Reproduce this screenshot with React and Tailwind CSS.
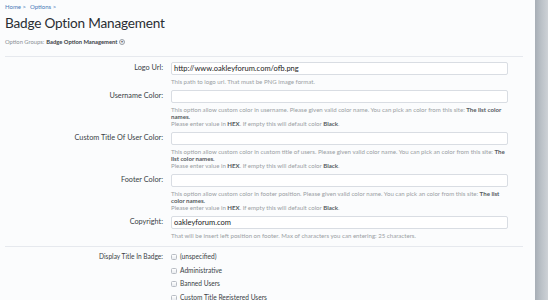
import React from "react";

const font = { fontFamily: "Lato, 'Open Sans', sans-serif" };

function Help({ children }) {
  return (
    <div className="mt-[2.5px] text-[6.1px] leading-[7px] text-[#9a9ea3]">{children}</div>
  );
}

function B({ children }) {
  return <b className="font-bold text-[#555a60]">{children}</b>;
}

function TextRow({ label, value, children }) {
  return (
    <>
      <div className="h-[13px] flex items-center justify-end text-[7.3px] text-[#3a3f45]">{label}</div>
      <div>
        <div className="h-[13px] bg-white border border-[#d9dde3] rounded-[2px] flex items-center px-[2px] text-[7.5px] text-[#222]">
          {value}
        </div>
        {children}
      </div>
    </>
  );
}

function ColorHelp({ text, tail }) {
  return (
    <Help>
      <div>
        {text} <B>{tail}</B>
      </div>
      <div>
        Please enter value in <B>HEX</B>. If empty this will default color <B>Black</B>.
      </div>
    </Help>
  );
}

export default function App() {
  const groups = ["(unspecified)", "Administrative", "Banned Users", "Custom Title Registered Users"];

  return (
    <div className="flex w-[548px] h-[300px] overflow-hidden bg-[#fbfcfd]" style={font}>
      <div className="flex-1 pl-[5px] pr-[12px]">
        <div className="pt-[3px] text-[6px] leading-[7px] text-[#4a7ab8] flex gap-[4px]">
          <span>Home &gt;</span>
          <span>Options &gt;</span>
        </div>
        <h1 className="mt-[4px] text-[13.6px] leading-[18px] tracking-[-0.2px] text-[#2a2e33] font-normal">
          Badge Option Management
        </h1>
        <div className="mt-[6px] flex items-center text-[5.8px] leading-[7px] text-[#8a8f95]">
          <span>Option Groups:</span>
          <span className="ml-[2px] font-bold text-[#3a3f45]">Badge Option Management</span>
          <span className="ml-[2px] w-[6px] h-[6px] rounded-full border border-[#9aa0a8] bg-[#eef0f3] flex items-center justify-center text-[4px] text-[#666]">
            ▾
          </span>
        </div>
        <div className="mt-[11px] h-px bg-[#e6e9ee]" />

        <div className="mt-[5px] grid grid-cols-[158px_337px] gap-x-[8px] gap-y-[5.5px]">
          <TextRow label="Logo Url:" value="http://www.oakleyforum.com/ofb.png">
            <Help>This path to logo url. That must be PNG image format.</Help>
          </TextRow>
          <TextRow label="Username Color:" value="">
            <ColorHelp
              text="This option allow custom color in username. Please given valid color name. You can pick an color from this site:"
              tail="The list color names."
            />
          </TextRow>
          <TextRow label="Custom Title Of User Color:" value="">
            <ColorHelp
              text="This option allow custom color in custom title of users. Please given valid color name. You can pick an color from this site:"
              tail="The list color names."
            />
          </TextRow>
          <TextRow label="Footer Color:" value="">
            <ColorHelp
              text="This option allow custom color in footer position. Please given valid color name. You can pick an color from this site:"
              tail="The list color names."
            />
          </TextRow>
          <TextRow label="Copyright:" value="oakleyforum.com">
            <Help>That will be insert left position on footer. Max of characters you can entering: 25 characters.</Help>
          </TextRow>
        </div>

        <div className="mt-[7.5px] h-px bg-[#e6e9ee]" />

        <div className="mt-[6px] grid grid-cols-[158px_337px] gap-x-[8px]">
          <div className="h-[8px] flex items-center justify-end text-[6.6px] text-[#3a3f45]">Display Title In Badge:</div>
          <div className="flex flex-col gap-[5.7px]">
            {groups.map((g) => (
              <div key={g} className="h-[8px] flex items-center gap-[3px] text-[6.6px] text-[#3a3f45]">
                <span className="w-[6px] h-[6px] rounded-[1.5px] border border-[#b8bdc4] bg-gradient-to-b from-white to-[#e8ebef]" />
                <span>{g}</span>
              </div>
            ))}
          </div>
        </div>
      </div>
      <div className="w-[13px] h-full bg-gradient-to-r from-[#a7aeb6] via-[#bcc2c8] to-[#cdd1d6]" />
    </div>
  );
}
